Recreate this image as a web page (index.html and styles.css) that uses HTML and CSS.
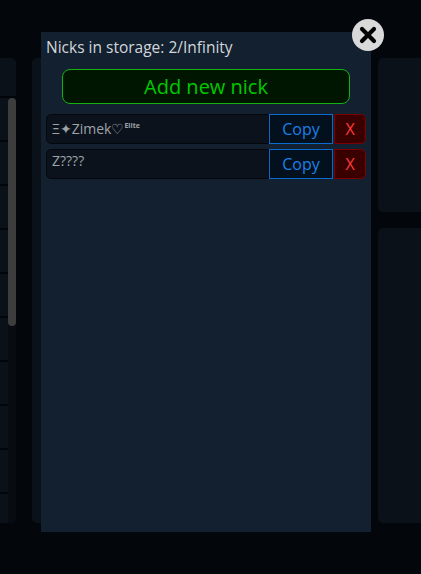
FILE: index.html
```html
<!DOCTYPE html>
<html>
<head>
<meta charset="utf-8">
<link rel="stylesheet" href="styles.css">
</head>
<body>
<div class="bg">
  <div class="card card-left">
    <div class="list-head"></div>
    <div class="list">
      <div class="rows">
        <div class="r"></div><div class="r"></div><div class="r"></div><div class="r"></div><div class="r"></div>
        <div class="r"></div><div class="r"></div><div class="r"></div><div class="r"></div><div class="r"></div>
      </div>
      <div class="track"><div class="thumb"></div></div>
    </div>
  </div>
  <div class="card card-mid"></div>
  <div class="col-right">
    <div class="card card-r1"></div>
    <div class="card card-r2"></div>
  </div>
</div>

<div class="modal">
  <div class="title">Nicks in storage: 2/Infinity</div>
  <button class="add">Add new nick</button>
  <div class="nick-list">
    <div class="nick">
      <div class="nick-name">Ξ✦Zimek♡<span class="sup">Elite</span></div>
      <button class="copy">Copy</button>
      <button class="del">X</button>
    </div>
    <div class="nick">
      <div class="nick-name">Z????</div>
      <button class="copy">Copy</button>
      <button class="del">X</button>
    </div>
  </div>
</div>
<button class="close" aria-label="close">
  <svg width="32" height="32" viewBox="0 0 32 32">
    <circle cx="16" cy="16" r="16" fill="#d9d9d9"/>
    <path d="M10 10 L22 22 M22 10 L10 22" stroke="#000" stroke-width="4.2" stroke-linecap="round"/>
  </svg>
</button>
</body>
</html>
```

FILE: styles.css
```css
* { box-sizing: border-box; }
html, body {
  margin: 0;
  padding: 0;
  width: 421px;
  height: 574px;
  overflow: hidden;
  background: #03070c;
  font-family: "Open Sans", "Lato", sans-serif;
}
.bg {
  display: flex;
  padding-top: 58px;
  height: 523px;
  width: 421px;
  overflow: hidden;
}
.card {
  background: #0a1118;
  border-radius: 5px;
}
.card-left {
  width: 16px;
  flex: none;
  display: flex;
  flex-direction: column;
  overflow: hidden;
  border-radius: 0 5px 5px 0;
}
.list-head {
  flex: none;
  height: 40px;
  border-bottom: 2px solid #02050a;
}
.list {
  flex: 1;
  min-height: 0;
  display: flex;
  overflow: hidden;
}
.rows {
  width: 8px;
  flex: none;
  display: flex;
  flex-direction: column;
}
.r {
  flex: none;
  height: 44px;
  border-bottom: 2px solid #02050a;
}
.track {
  width: 8px;
  flex: none;
  background: #080c10;
}
.thumb {
  height: 228px;
  background: #3d3d3d;
  border-radius: 4px;
}
.card-mid {
  margin-left: 16px;
  width: 330px;
  flex: none;
}
.col-right {
  margin-left: 16px;
  flex: 1;
  display: flex;
  flex-direction: column;
  gap: 16px;
}
.card-r1 { height: 154px; border-radius: 5px 0 0 5px; }
.card-r2 { flex: 1; border-radius: 5px 0 0 5px; }

.modal {
  position: absolute;
  left: 41px;
  top: 32px;
  width: 330px;
  height: 500px;
  background: #13202f;
  padding: 4px 5px;
}
.title {
  color: #d2d6da;
  font-size: 15.5px;
  line-height: 22px;
}
.add {
  display: block;
  margin: 11px 16px 0;
  width: 288px;
  height: 35px;
  background: #001600;
  border: 1px solid #14b014;
  border-radius: 8px;
  color: #00c800;
  font-family: inherit;
  font-size: 20px;
  font-weight: 500;
  padding: 0;
}
.nick-list {
  margin-top: 10px;
  display: flex;
  flex-direction: column;
  gap: 5px;
}
.nick {
  display: flex;
  height: 30px;
}
.nick-name {
  flex: 1;
  background: #0b121c;
  border: 1px solid #04080d;
  border-radius: 5px 0 0 5px;
  color: #9ea3a8;
  font-size: 14px;
  line-height: 22px;
  padding-left: 5px;
  white-space: nowrap;
}
.sup {
  font-size: 7px;
  vertical-align: 6px;
  font-weight: bold;
}
.copy {
  width: 64px;
  height: 30px;
  background: #03101e;
  border: 1px solid #0a6ad0;
  color: #1a80e8;
  font-family: inherit;
  font-size: 16px;
  font-weight: 500;
  padding: 0;
}
.del {
  width: 32px;
  height: 30px;
  margin-left: 1px;
  background: #3a0000;
  border: 1px solid #7c0000;
  border-radius: 0 5px 5px 0;
  color: #ff3a3a;
  font-family: inherit;
  font-size: 16px;
  padding: 0;
}
.close {
  position: absolute;
  left: 352px;
  top: 19px;
  width: 32px;
  height: 32px;
  padding: 0;
  border: 0;
  background: none;
  line-height: 0;
}
```
